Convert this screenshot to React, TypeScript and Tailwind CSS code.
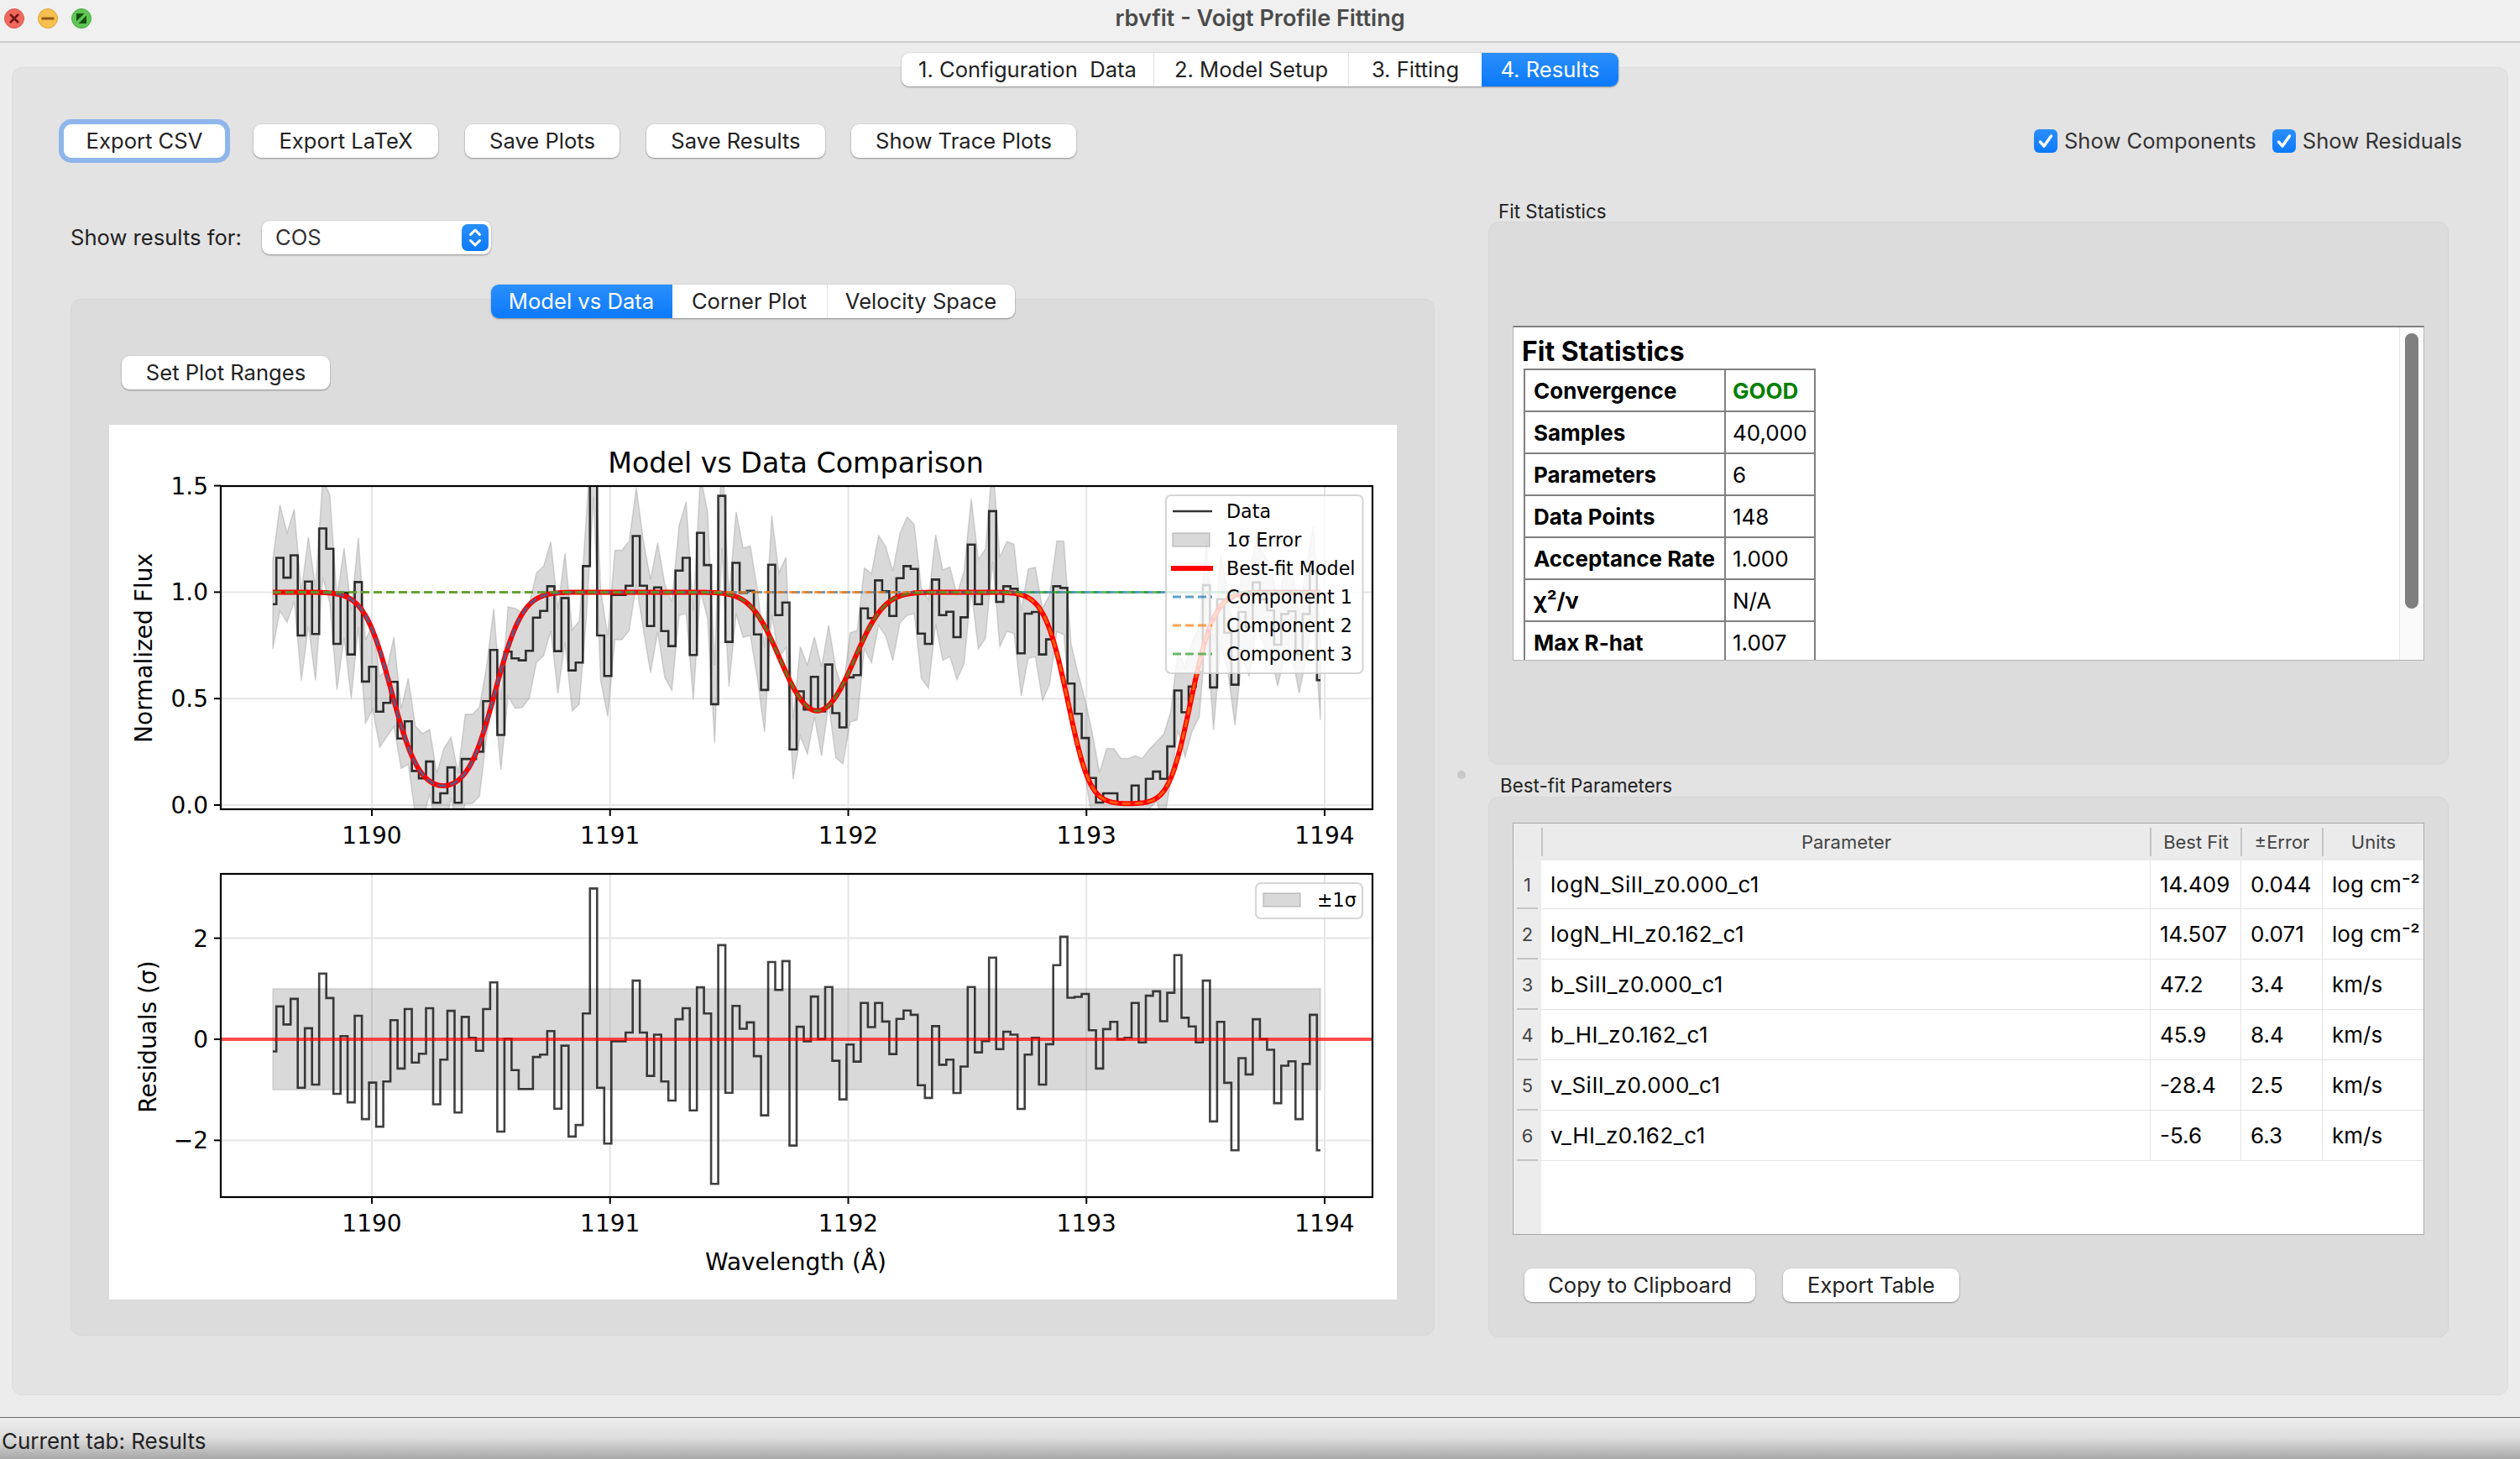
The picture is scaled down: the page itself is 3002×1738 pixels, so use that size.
import type { ReactNode } from "react"

// step levels read off the reference plots (one per wavelength bin, 148 bins)
const fluxLevels = [
  658, 492, 563, 483, 770, 577, 765, 387, 460, 800, 617, 838, 579, 935, 882, 1043, 1011, 936, 1139, 1077, 1255, 1281,
  1221, 1369, 1335, 1242, 1369, 1212, 1212, 1186, 1005, 822, 1126, 828, 852, 859, 825, 706, 682, 594, 826, 636, 895,
  867, 522, 100, 770, 915, 625, 625, 592, 414, 592, 736, 598, 754, 808, 538, 492, 840, 403, 518, 1016, 270, 793, 510,
  617, 610, 766, 965, 517, 697, 652, 1178, 970, 1035, 918, 1042, 874, 1048, 1099, 920, 912, 673, 708, 573, 612, 700,
  565, 522, 532, 763, 800, 570, 697, 685, 776, 705, 445, 658, 620, 325, 650, 594, 603, 834, 692, 686, 838, 784, 594,
  600, 942, 1050, 1137, 1280, 1368, 1335, 1335, 1370, 1370, 1307, 1370, 1283, 1257, 1283, 1167, 967, 1045, 953, 900,
  590, 956, 640, 760, 946, 686, 740, 580, 640, 680, 803, 693, 683, 836, 693, 540, 930,
]
const residualLevels = [
  733, 578, 640, 552, 858, 653, 847, 465, 549, 879, 680, 908, 610, 966, 840, 992, 836, 625, 792, 587, 771, 741, 584,
  915, 761, 593, 943, 614, 686, 731, 587, 495, 1009, 689, 797, 862, 862, 752, 744, 663, 930, 713, 1026, 986, 602, 172,
  858, 1050, 698, 698, 668, 489, 668, 817, 675, 836, 902, 622, 584, 936, 512, 602, 1189, 367, 875, 576, 655, 633, 749,
  953, 425, 521, 422, 1057, 648, 698, 544, 690, 511, 765, 898, 709, 768, 566, 649, 566, 630, 742, 621, 592, 607, 849,
  893, 646, 779, 761, 876, 785, 511, 736, 697, 410, 725, 665, 675, 931, 744, 686, 847, 708, 436, 338, 548, 545, 535,
  660, 792, 656, 631, 692, 686, 566, 702, 541, 526, 629, 531, 401, 617, 647, 702, 489, 974, 631, 841, 1073, 756, 812,
  622, 690, 727, 911, 782, 767, 966, 776, 607, 1073,
]

const axLeft = 133
const axRight = 1505
const topAxTop = 73
const topAxBottom = 458
const botAxTop = 535
const botAxBottom = 920
const binStart = 195
const binStep = 8.49

const waveToX = (w: number) => 313 + (w - 1190) * 283.75
const fluxToY = (f: number) => 453 - f * 253.6
const resToY = (r: number) => 732 - r * 60.2
const xTicks = [1190, 1191, 1192, 1193, 1194]

const dips = [
  { c: 1190.3, tau: 2.4, s: 0.133 },
  { c: 1193.18, tau: 5.0, s: 0.131 },
  { c: 1191.87, tau: 0.816, s: 0.126 },
]
const comp = (d: (typeof dips)[number], w: number) => Math.exp(-d.tau * Math.exp(-((w - d.c) ** 2) / (2 * d.s * d.s)))
const xToWave = (x: number) => 1190 + (x - 313) / 283.75
const modelAt = (x: number) => dips.reduce((p, d) => p * comp(d, xToWave(x)), 1)

const flux = fluxLevels.map((z) => (1377 - z) / 762)
const residuals = residualLevels.map((z) => (691 - z) / 174)
const binX = flux.map((_, i) => binStart + i * binStep)
const sigma = flux.map((f, i) => {
  const r = residuals[i]
  if (Math.abs(r) < 0.5) return 0.21
  return Math.min(0.3, Math.max(0.14, Math.abs(f - modelAt(binX[i])) / Math.abs(r)))
})

function stepPath(ys: number[]) {
  let d = `M${binStart} ${ys[0].toFixed(1)}`
  ys.forEach((y, i) => {
    if (i > 0) d += `V${y.toFixed(1)}`
    d += `H${(i === ys.length - 1 ? binX[i] : binX[i] + binStep / 2).toFixed(1)}`
  })
  return d
}

const curvePoints = (fn: (x: number) => number) => {
  const pts: string[] = []
  for (let x = binStart; x <= binX[147]; x += 2) pts.push(`${x.toFixed(1)},${fluxToY(fn(x)).toFixed(1)}`)
  return pts.join(" ")
}

const bandPoints = [
  ...binX.map((x, i) => `${x.toFixed(1)},${fluxToY(flux[i] + sigma[i]).toFixed(1)}`),
  ...binX.map((x, i) => `${x.toFixed(1)},${fluxToY(flux[i] - sigma[i]).toFixed(1)}`).reverse(),
].join(" ")

function Axes({ top, bottom, yTicks }: { top: number; bottom: number; yTicks: { y: number; label: string }[] }) {
  return (
    <>
      <rect x={axLeft} y={top} width={axRight - axLeft} height={bottom - top} fill="none" stroke="#000" strokeWidth="2.2" />
      {xTicks.map((t) => (
        <g key={t}>
          <line x1={waveToX(t)} x2={waveToX(t)} y1={bottom} y2={bottom + 8} stroke="#000" strokeWidth="2" />
          <text x={waveToX(t)} y={bottom + 41} textAnchor="middle" fontSize="28" fill="#000">
            {t}
          </text>
        </g>
      ))}
      {yTicks.map((t) => (
        <g key={t.label}>
          <line x1={axLeft - 8} x2={axLeft} y1={t.y} y2={t.y} stroke="#000" strokeWidth="2" />
          <text x={axLeft - 15} y={t.y + 10} textAnchor="end" fontSize="28" fill="#000">
            {t.label}
          </text>
        </g>
      ))}
    </>
  )
}

function Grid({ top, bottom, ys }: { top: number; bottom: number; ys: number[] }) {
  return (
    <g stroke="#e6e6e6" strokeWidth="2">
      {xTicks.map((t) => (
        <line key={t} x1={waveToX(t)} x2={waveToX(t)} y1={top} y2={bottom} />
      ))}
      {ys.map((y) => (
        <line key={y} x1={axLeft} x2={axRight} y1={y} y2={y} />
      ))}
    </g>
  )
}

function ResultsPlot() {
  const legendRow = (y: number, label: string) => (
    <text x={1331} y={y + 8} fontSize="22.2" fill="#000">
      {label}
    </text>
  )
  return (
    <svg width="1534" height="1042" viewBox="0 0 1534 1042" className="block bg-white font-['DejaVu_Sans',sans-serif]">
      <defs>
        <clipPath id="topAx">
          <rect x={axLeft} y={topAxTop} width={axRight - axLeft} height={topAxBottom - topAxTop} />
        </clipPath>
      </defs>
      <text x={818} y={57} textAnchor="middle" fontSize="33.3" fill="#000">
        Model vs Data Comparison
      </text>

      {/* flux panel */}
      <Grid top={topAxTop} bottom={topAxBottom} ys={[fluxToY(0), fluxToY(0.5), fluxToY(1)]} />
      <g clipPath="url(#topAx)">
        <polygon points={bandPoints} fill="rgba(128,128,128,0.3)" stroke="rgba(128,128,128,0.3)" strokeWidth="1.5" />
        <path d={stepPath(flux.map(fluxToY))} fill="none" stroke="rgba(0,0,0,0.8)" strokeWidth="2.6" />
        <polyline points={curvePoints(modelAt)} fill="none" stroke="#ff0000" strokeWidth="6" />
        <polyline points={curvePoints((x) => comp(dips[0], xToWave(x)))} fill="none" stroke="rgba(31,119,180,0.7)" strokeWidth="3" strokeDasharray="10 5" />
        <polyline points={curvePoints((x) => comp(dips[1], xToWave(x)))} fill="none" stroke="rgba(255,127,14,0.7)" strokeWidth="3" strokeDasharray="10 5" />
        <polyline points={curvePoints((x) => comp(dips[2], xToWave(x)))} fill="none" stroke="rgba(44,160,44,0.7)" strokeWidth="3" strokeDasharray="10 5" />
      </g>
      <Axes
        top={topAxTop}
        bottom={topAxBottom}
        yTicks={[
          { y: fluxToY(0), label: "0.0" },
          { y: fluxToY(0.5), label: "0.5" },
          { y: fluxToY(1), label: "1.0" },
          { y: fluxToY(1.5), label: "1.5" },
        ]}
      />
      <text transform="translate(51 266) rotate(-90)" textAnchor="middle" fontSize="28" fill="#000">
        Normalized Flux
      </text>

      {/* legend */}
      <rect x={1259} y={84} width={234.5} height={212} rx="6" fill="rgba(255,255,255,0.8)" stroke="rgba(204,204,204,0.8)" strokeWidth="2.2" />
      <line x1={1267} x2={1314} y1={103} y2={103} stroke="rgba(0,0,0,0.8)" strokeWidth="2.6" />
      <rect x={1267} y={129} width={44} height={16} fill="rgba(128,128,128,0.3)" stroke="rgba(128,128,128,0.3)" strokeWidth="2" />
      <line x1={1265} x2={1315} y1={171} y2={171} stroke="#ff0000" strokeWidth="6" />
      <line x1={1267} x2={1314} y1={205} y2={205} stroke="rgba(31,119,180,0.7)" strokeWidth="3" strokeDasharray="10 5" />
      <line x1={1267} x2={1314} y1={239} y2={239} stroke="rgba(255,127,14,0.7)" strokeWidth="3" strokeDasharray="10 5" />
      <line x1={1267} x2={1314} y1={273} y2={273} stroke="rgba(44,160,44,0.7)" strokeWidth="3" strokeDasharray="10 5" />
      {legendRow(103, "Data")}
      {legendRow(137, "1σ Error")}
      {legendRow(171, "Best-fit Model")}
      {legendRow(205, "Component 1")}
      {legendRow(239, "Component 2")}
      {legendRow(273, "Component 3")}

      {/* residual panel */}
      <Grid top={botAxTop} bottom={botAxBottom} ys={[resToY(2), resToY(-2)]} />
      <rect x={binStart} y={resToY(1)} width={binX[147] - binStart} height={resToY(-1) - resToY(1)} fill="rgba(128,128,128,0.3)" stroke="rgba(128,128,128,0.2)" strokeWidth="2" />
      <path d={stepPath(residuals.map(resToY))} fill="none" stroke="rgba(0,0,0,0.75)" strokeWidth="2.6" />
      <line x1={axLeft} x2={axRight} y1={resToY(0)} y2={resToY(0)} stroke="rgba(255,0,0,0.7)" strokeWidth="4" />
      <Axes
        top={botAxTop}
        bottom={botAxBottom}
        yTicks={[
          { y: resToY(2), label: "2" },
          { y: resToY(0), label: "0" },
          { y: resToY(-2), label: "−2" },
        ]}
      />
      <text transform="translate(56 729) rotate(-90)" textAnchor="middle" fontSize="28" fill="#000">
        Residuals (σ)
      </text>
      <text x={818} y={1007} textAnchor="middle" fontSize="28" fill="#000">
        Wavelength (Å)
      </text>
      <rect x={1366} y={546} width={127} height={42} rx="6" fill="rgba(255,255,255,0.8)" stroke="rgba(204,204,204,0.8)" strokeWidth="2.2" />
      <rect x={1375} y={558} width={44} height={16} fill="rgba(128,128,128,0.3)" stroke="rgba(128,128,128,0.3)" strokeWidth="2" />
      <text x={1439} y={574} fontSize="22.2" fill="#000">
        ±1σ
      </text>
    </svg>
  )
}

function PushButton({ children, className = "" }: { children: ReactNode; className?: string }) {
  return (
    <button className={`h-[40px] rounded-[9px] bg-white text-[25.6px] leading-none text-[#222] shadow-[0_1px_2px_rgba(0,0,0,0.35),0_0_0_1px_rgba(0,0,0,0.04)] ${className}`}>
      {children}
    </button>
  )
}

function Segments({ items, active, widths }: { items: string[]; active: number; widths: string[] }) {
  return (
    <div className="relative z-10 flex h-[40px] rounded-[9px] bg-white shadow-[0_1px_2px_rgba(0,0,0,0.35),0_0_0_1px_rgba(0,0,0,0.04)]">
      {items.map((label, i) => (
        <div
          key={label}
          className={`flex items-center justify-center whitespace-pre text-[25.6px] ${widths[i]} ${
            i === active
              ? "bg-gradient-to-b from-[#2a8ffb] to-[#0a79fb] text-white"
              : "text-[#222] " + (i < items.length - 1 && i + 1 !== active ? "border-r border-[#e2e2e2]" : "")
          } ${i === 0 ? "rounded-l-[9px]" : ""} ${i === items.length - 1 ? "rounded-r-[9px]" : ""}`}
        >
          {label}
        </div>
      ))}
    </div>
  )
}

function CheckOption({ label }: { label: string }) {
  return (
    <label className="flex items-center gap-[8px] text-[25.6px] text-[#333]">
      <span className="flex h-[28px] w-[28px] items-center justify-center rounded-[6px] bg-gradient-to-b from-[#2a8ffb] to-[#0a79fb]">
        <svg width="20" height="20" viewBox="0 0 20 20" fill="none" stroke="#fff" strokeWidth="3.4" strokeLinecap="round" strokeLinejoin="round">
          <path d="M3.5 11 8 16 16.5 4" />
        </svg>
      </span>
      {label}
    </label>
  )
}

const fitStats: [string, string][] = [
  ["Convergence", "GOOD"],
  ["Samples", "40,000"],
  ["Parameters", "6"],
  ["Data Points", "148"],
  ["Acceptance Rate", "1.000"],
  ["χ²/ν", "N/A"],
  ["Max R-hat", "1.007"],
]

const bestFit = [
  ["logN_SiII_z0.000_c1", "14.409", "0.044", "log cm⁻²"],
  ["logN_HI_z0.162_c1", "14.507", "0.071", "log cm⁻²"],
  ["b_SiII_z0.000_c1", "47.2", "3.4", "km/s"],
  ["b_HI_z0.162_c1", "45.9", "8.4", "km/s"],
  ["v_SiII_z0.000_c1", "-28.4", "2.5", "km/s"],
  ["v_HI_z0.162_c1", "-5.6", "6.3", "km/s"],
]

function FitStatistics() {
  return (
    <div className="flex h-[399px] overflow-hidden border border-[#b4b4b4] border-t-2 border-t-[#808080] bg-white">
      <div className="flex-1 pl-[10px] pt-[11px]">
        <h2 className="text-[32px] font-bold leading-[36px] text-black">Fit Statistics</h2>
        <table className="ml-[2px] mt-[2px] w-[348px] border-collapse">
          <tbody>
            {fitStats.map(([k, v]) => (
              <tr key={k} className="h-[50px]">
                <td className="w-[239px] border-2 border-[#808080] pl-[10px] text-[26px] font-bold text-black">{k}</td>
                <td className={`border-2 border-[#808080] pl-[8px] text-[26px] ${v === "GOOD" ? "font-bold text-[#008000]" : "text-black"}`}>{v}</td>
              </tr>
            ))}
          </tbody>
        </table>
      </div>
      <div className="w-[29px] border-l border-[#e6e6e6] bg-[#fafafa] pl-[6px] pt-[7px]">
        <div className="h-[328px] w-[16px] rounded-full bg-[#7f7f7f]" />
      </div>
    </div>
  )
}

function ParameterTable() {
  const columns = "grid-cols-[33px_725px_108px_97px_121px]"
  return (
    <div className="h-[491px] overflow-hidden border border-[#a8a8a8] bg-white">
      <div className={`grid h-[44px] ${columns} items-center bg-[#ebebeb] text-[22px] text-[#444]`}>
        <div className="h-[34px]" />
        {["Parameter", "Best Fit", "±Error", "Units"].map((h) => (
          <div key={h} className="flex h-[34px] items-center justify-center border-l-2 border-[#c4c4c4]">
            {h}
          </div>
        ))}
      </div>
      <div className="flex h-[446px]">
        <div className="w-[33px] bg-[#ececec]">
          {bestFit.map((_, i) => (
            <div key={i} className={`relative flex items-center justify-center text-[22px] text-[#444] ${i === 0 ? "h-[58px]" : "h-[60px]"}`}>
              {i + 1}
              <span className="absolute bottom-0 left-[4px] h-[2px] w-[25px] bg-[#c4c4c4]" />
            </div>
          ))}
        </div>
        <div className="flex-1">
          {bestFit.map((row, i) => (
            <div key={row[0]} className={`grid grid-cols-[725px_108px_97px_121px] border-b border-[#e4e4e4] text-[26px] text-black ${i === 0 ? "h-[58px]" : "h-[60px]"}`}>
              {row.map((cell, j) => (
                <div key={j} className={`flex items-center pl-[11px] ${j > 0 ? "border-l border-[#e4e4e4]" : "tracking-[0.5px]"}`}>
                  {cell}
                </div>
              ))}
            </div>
          ))}
        </div>
      </div>
    </div>
  )
}

export default function App() {
  return (
    <div className="flex h-[1738px] w-[3002px] flex-col overflow-hidden bg-[#ececec] font-['Inter',sans-serif]">
      {/* title bar */}
      <div className="relative flex h-[51px] shrink-0 items-center justify-center border-b-2 border-[#cdcdcd] bg-[#f0f0f0] pb-[4px]">
        <div className="absolute left-[5px] top-[10px] flex gap-[16px]">
          <svg width="24" height="24" viewBox="0 0 24 24">
            <circle cx="12" cy="12" r="11.5" fill="#f0695f" stroke="#d8584f" />
            <path d="M7 7l10 10M17 7 7 17" stroke="#6e1512" strokeWidth="2.6" />
          </svg>
          <svg width="24" height="24" viewBox="0 0 24 24">
            <circle cx="12" cy="12" r="11.5" fill="#f6bf4f" stroke="#dca53c" />
            <path d="M4.5 12h15" stroke="#8f5a14" strokeWidth="3" />
          </svg>
          <svg width="24" height="24" viewBox="0 0 24 24">
            <circle cx="12" cy="12" r="11.5" fill="#5fc553" stroke="#4aa93f" />
            <path d="M6 6h9.5L6 15.5zM18 18H8.5L18 8.5z" fill="#16500f" />
          </svg>
        </div>
        <span className="text-[27px] font-semibold text-[#4b4b4b]">rbvfit - Voigt Profile Fitting</span>
      </div>

      {/* central widget */}
      <div className="flex flex-1 flex-col px-[14px] pt-[12px]">
        <div className="flex justify-center">
          <Segments
            items={["1. Configuration  Data", "2. Model Setup", "3. Fitting", "4. Results"]}
            active={3}
            widths={["w-[301px]", "w-[232px]", "w-[158px]", "w-[163px]"]}
          />
        </div>

        <div className="-mt-[23px] h-[1582px] rounded-[12px] border border-[#dcdcdc] bg-[#e3e3e3] pt-[67px]">
          {/* toolbar */}
          <div className="flex h-[40px] items-center pl-[61px] pr-[54px]">
            <PushButton className="w-[192px] ring-[6px] ring-[#8fb6ea]">Export CSV</PushButton>
            <PushButton className="ml-[34px] w-[220px]">Export LaTeX</PushButton>
            <PushButton className="ml-[32px] w-[184px]">Save Plots</PushButton>
            <PushButton className="ml-[32px] w-[213px]">Save Results</PushButton>
            <PushButton className="ml-[31px] w-[268px]">Show Trace Plots</PushButton>
            <div className="ml-auto flex gap-[19px]">
              <CheckOption label="Show Components" />
              <CheckOption label="Show Residuals" />
            </div>
          </div>

          <div className="mt-[52px] flex pl-[69px]">
            {/* left column */}
            <div className="w-[1625px] pt-[23px]">
              <div className="flex h-[40px] items-center">
                <span className="w-[228px] text-[25.6px] text-[#222]">Show results for:</span>
                <div className="flex h-[40px] w-[273px] items-center justify-between rounded-[9px] bg-white pl-[16px] pr-[3px] text-[25.6px] text-[#333] shadow-[0_1px_2px_rgba(0,0,0,0.35),0_0_0_1px_rgba(0,0,0,0.04)]">
                  COS
                  <span className="flex h-[32px] w-[32px] items-center justify-center rounded-[7px] bg-gradient-to-b from-[#2a8ffb] to-[#0a79fb]">
                    <svg width="18" height="26" viewBox="0 0 18 26" fill="none" stroke="#fff" strokeWidth="3" strokeLinecap="round" strokeLinejoin="round">
                      <path d="M3.5 9.5 9 4l5.5 5.5M3.5 16.5 9 22l5.5-5.5" />
                    </svg>
                  </span>
                </div>
              </div>

              <div className="relative mt-[36px] flex justify-center">
                <Segments
                  items={["Model vs Data", "Corner Plot", "Velocity Space"]}
                  active={0}
                  widths={["w-[216px]", "w-[185px]", "w-[223px]"]}
                />
              </div>
              <div className="-mt-[23px] h-[1235px] rounded-[12px] border border-[#d6d6d6] bg-[#dcdcdc] pl-[45px] pt-[67px]">
                <PushButton className="ml-[15px] w-[248px]">Set Plot Ranges</PushButton>
                <div className="mt-[42px]">
                  <ResultsPlot />
                </div>
              </div>
            </div>

            {/* splitter */}
            <div className="flex w-[64px] items-center justify-center pt-[13px]">
              <span className="h-[10px] w-[10px] rounded-full bg-[#c9c9c9]" />
            </div>

            {/* right column */}
            <div className="w-[1144px]">
              <div className="flex h-[24px] items-center pl-[12px] text-[22.4px] text-[#222]">Fit Statistics</div>
              <div className="h-[647px] rounded-[12px] border border-[#d6d6d6] bg-[#dcdcdc] px-[28px] pt-[123px]">
                <FitStatistics />
              </div>
              <div className="flex h-[38px] items-center pl-[14px] pt-[12px] text-[22.4px] text-[#222]">Best-fit Parameters</div>
              <div className="h-[644px] rounded-[12px] border border-[#d6d6d6] bg-[#dcdcdc] px-[28px] pt-[30px]">
                <ParameterTable />
                <div className="mt-[40px] flex gap-[33px] pl-[14px]">
                  <PushButton className="w-[275px]">Copy to Clipboard</PushButton>
                  <PushButton className="w-[210px]">Export Table</PushButton>
                </div>
              </div>
            </div>
          </div>
        </div>
      </div>

      {/* status bar */}
      <div className="flex h-[50px] shrink-0 items-center border-t border-[#6a6a6a] bg-gradient-to-b from-[#ededed] via-[#dcdcdc] to-[#a8a8a8] pl-[2px] pt-[5px] text-[26px] text-[#222]">
        Current tab: Results
      </div>
    </div>
  )
}
